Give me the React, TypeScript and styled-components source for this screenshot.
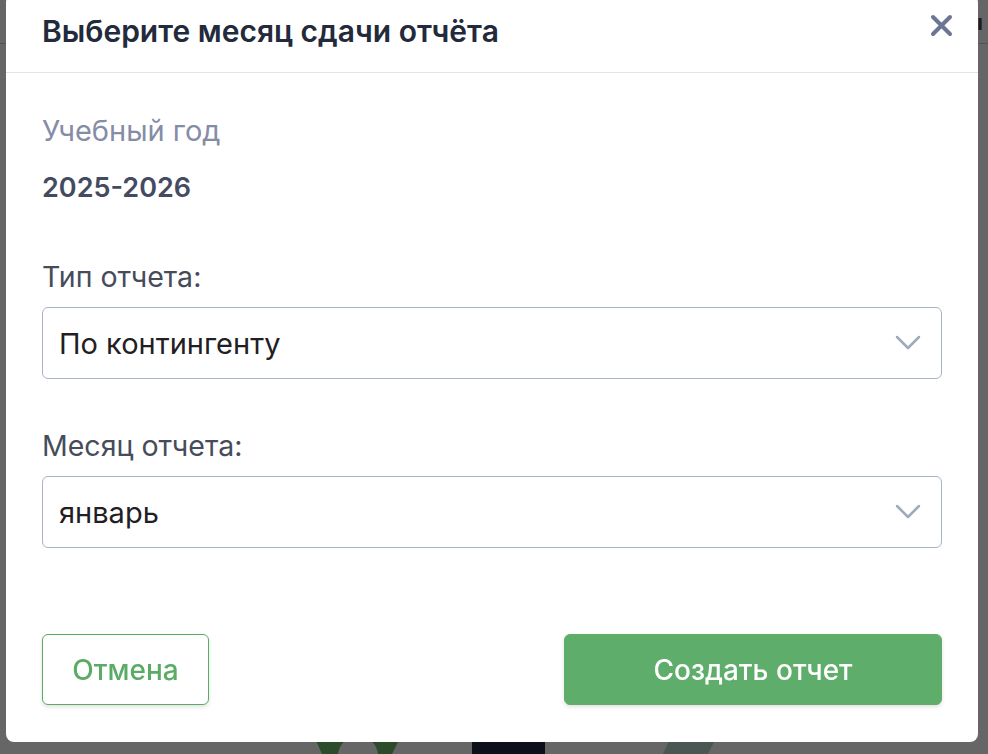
import React, { useState } from 'react';
import styled, { createGlobalStyle } from 'styled-components';

const GlobalStyle = createGlobalStyle`
  * { box-sizing: border-box; }
  html, body {
    margin: 0;
    padding: 0;
    height: 754px;
    overflow: hidden;
    font-family: Inter, "Noto Sans", "Liberation Sans", sans-serif;
    background: #ffffff;
  }
`;

/* page behind the dialog */
const Page = styled.div`
  width: 988px;
  height: 754px;
  background: #ffffff;
  display: flex;
  flex-direction: column;
`;

const PageHeader = styled.header`
  height: 44px;
  border-bottom: 1px solid #d0d0d0;
  display: flex;
  justify-content: flex-end;
  align-items: center;
`;

const PageNavItem = styled.span`
  font-size: 22px;
  font-weight: 700;
  color: #4a4f5c;
  margin-right: 5px;
`;

const PageContent = styled.div`
  flex: 1;
  display: flex;
  align-items: flex-end;
`;

const Illustration = styled.svg`
  display: block;
`;

const Overlay = styled.div`
  position: fixed;
  inset: 0;
  background: rgba(0, 0, 0, 0.6);
  display: flex;
  align-items: flex-start;
  padding-left: 6px;
`;

const Modal = styled.div`
  position: relative;
  width: 972px;
  margin-top: -6px;
  background: #ffffff;
  border-radius: 8px;
  display: flex;
  flex-direction: column;
`;

const ModalHeader = styled.div`
  padding: 21px 36px 25px;
  border-bottom: 1px solid #e2e2e8;
`;

const Title = styled.h2`
  margin: 0;
  font-size: 30px;
  line-height: 32px;
  font-weight: 600;
  color: #222a3b;
`;

const CloseButton = styled.button`
  position: absolute;
  top: 20px;
  right: 25px;
  width: 23px;
  height: 23px;
  padding: 0;
  border: none;
  background: none;
  cursor: pointer;
  display: flex;
`;

const ModalBody = styled.div`
  padding: 42px 36px 0;
  display: flex;
  flex-direction: column;
`;

const Caption = styled.div`
  font-size: 29px;
  line-height: 32px;
  color: #868ca6;
`;

const YearValue = styled.div`
  margin-top: 25px;
  font-size: 27px;
  line-height: 32px;
  font-weight: 600;
  color: #444b61;
`;

const Field = styled.div<{ $gap: number }>`
  margin-top: ${p => p.$gap}px;
  display: flex;
  flex-direction: column;
  gap: 14px;
`;

const Label = styled.label`
  font-size: 28.5px;
  line-height: 32px;
  color: #464c5b;
`;

const SelectBox = styled.div`
  height: 72px;
  border: 1px solid #a8b4c4;
  border-radius: 6px;
  padding: 0 20px 0 16px;
  display: flex;
  align-items: center;
  justify-content: space-between;
  cursor: pointer;
`;

const SelectValue = styled.span`
  font-size: 29px;
  color: #1f2023;
`;

const ModalFooter = styled.div`
  padding: 86px 36px 37px;
  display: flex;
  justify-content: space-between;
`;

const Button = styled.button<{ $primary?: boolean }>`
  height: 71px;
  width: ${p => (p.$primary ? '378px' : '167px')};
  border-radius: 6px;
  font-family: inherit;
  font-size: 28px;
  font-weight: 500;
  cursor: pointer;
  border: 1px solid ${p => (p.$primary ? '#5fad6b' : '#5aab66')};
  background: ${p => (p.$primary ? '#5fad6b' : '#ffffff')};
  color: ${p => (p.$primary ? '#ffffff' : '#5aab66')};
  box-shadow: 0 2px 4px rgba(0, 0, 0, 0.12);
`;

const Chevron = () => (
  <svg width="26" height="16" viewBox="0 0 26 16" fill="none">
    <path d="M2 2L13 13L24 2" stroke="#9dabbd" strokeWidth="2.5" strokeLinecap="round" strokeLinejoin="round" />
  </svg>
);

const Select = ({ value }: { value: string }) => (
  <SelectBox>
    <SelectValue>{value}</SelectValue>
    <Chevron />
  </SelectBox>
);

export default function App() {
  const [reportType] = useState('По контингенту');
  const [month] = useState('январь');

  return (
    <>
      <GlobalStyle />
      <Page>
        <PageHeader>
          <PageNavItem>Отчёты</PageNavItem>
        </PageHeader>
        <PageContent>
          <Illustration width="988" height="20" viewBox="0 0 988 20">
            <path d="M313 0 H402 L392 20 H322 Z" fill="#72b86a" />
            <circle cx="358" cy="22" r="20" fill="#ffffff" />
            <rect x="472" y="0" width="73" height="20" fill="#212a45" />
            <path d="M672 0 H718 L708 20 H663 Z" fill="#b9d6d3" />
          </Illustration>
        </PageContent>
      </Page>
      <Overlay>
        <Modal>
          <ModalHeader>
            <Title>Выберите месяц сдачи отчёта</Title>
          </ModalHeader>
          <CloseButton aria-label="Закрыть">
            <svg width="23" height="23" viewBox="0 0 23 23">
              <path d="M3 3L20 20M20 3L3 20" stroke="#6b7594" strokeWidth="4" strokeLinecap="round" />
            </svg>
          </CloseButton>
          <ModalBody>
            <Caption>Учебный год</Caption>
            <YearValue>2025-2026</YearValue>
            <Field $gap={57}>
              <Label>Тип отчета:</Label>
              <Select value={reportType} />
            </Field>
            <Field $gap={51}>
              <Label>Месяц отчета:</Label>
              <Select value={month} />
            </Field>
          </ModalBody>
          <ModalFooter>
            <Button>Отмена</Button>
            <Button $primary>Создать отчет</Button>
          </ModalFooter>
        </Modal>
      </Overlay>
    </>
  );
}
